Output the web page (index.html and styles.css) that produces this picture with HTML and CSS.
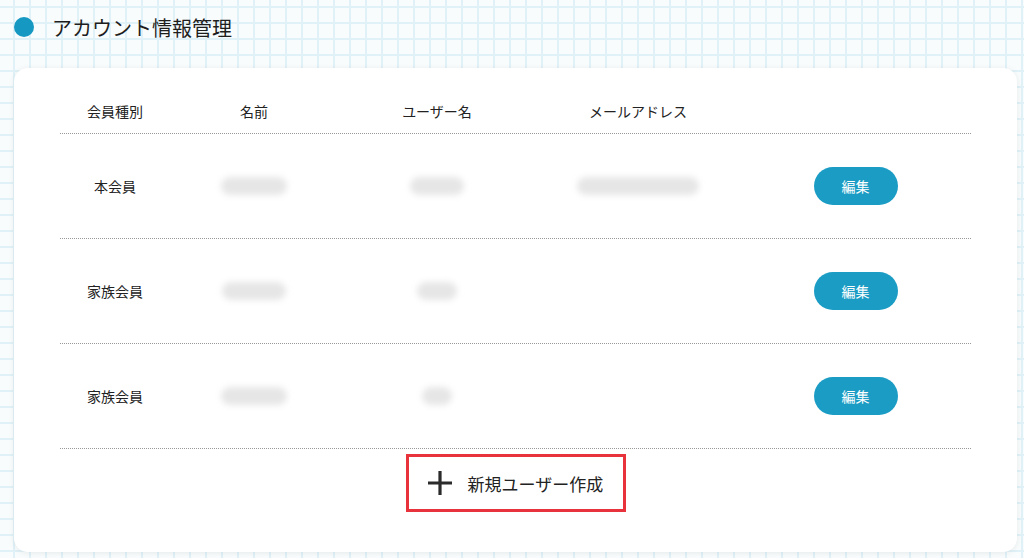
FILE: index.html
```html
<!DOCTYPE html>
<html lang="ja">

<head>
    <meta charset="UTF-8">
    <meta name="viewport" content="width=device-width, initial-scale=1.0">
    <title>アカウント情報管理</title>
    <link rel="stylesheet" href="styles.css">
</head>

<body>
    <div class="page">
        <h1 class="page-title"><span class="title-dot"></span>アカウント情報管理</h1>

        <div class="card">
            <div class="account-table">
                <div class="table-row table-head">
                    <div class="cell">会員種別</div>
                    <div class="cell">名前</div>
                    <div class="cell">ユーザー名</div>
                    <div class="cell">メールアドレス</div>
                    <div class="cell"></div>
                </div>

                <div class="table-row">
                    <div class="cell">本会員</div>
                    <div class="cell"><span class="masked" style="width: 66px"></span></div>
                    <div class="cell"><span class="masked" style="width: 54px"></span></div>
                    <div class="cell"><span class="masked" style="width: 122px"></span></div>
                    <div class="cell"><button class="edit-button">編集</button></div>
                </div>

                <div class="table-row">
                    <div class="cell">家族会員</div>
                    <div class="cell"><span class="masked" style="width: 64px"></span></div>
                    <div class="cell"><span class="masked" style="width: 40px"></span></div>
                    <div class="cell"></div>
                    <div class="cell"><button class="edit-button">編集</button></div>
                </div>

                <div class="table-row">
                    <div class="cell">家族会員</div>
                    <div class="cell"><span class="masked" style="width: 66px"></span></div>
                    <div class="cell"><span class="masked" style="width: 30px"></span></div>
                    <div class="cell"></div>
                    <div class="cell"><button class="edit-button">編集</button></div>
                </div>
            </div>

            <div class="table-footer">
                <button class="add-user">
                    <svg class="add-icon" width="28" height="28" viewBox="0 0 28 28">
                        <path d="M14 2v24M2 14h24" stroke="#2b2b2b" stroke-width="3.2" fill="none"/>
                    </svg>
                    <span>新規ユーザー作成</span>
                </button>
            </div>
        </div>
    </div>
</body>

</html>
```

FILE: styles.css
```css
* {
    margin: 0;
    padding: 0;
    box-sizing: border-box;
}

body {
    font-family: "Noto Sans CJK JP", "Noto Sans", sans-serif;
    color: #333;
    background-color: #f8fcfd;
    background-image:
        linear-gradient(#e0f2f8 2px, transparent 2px),
        linear-gradient(90deg, #e0f2f8 2px, transparent 2px);
    background-size: 16px 16px;
    background-position: 0 6px, 13px 0;
    height: 558px;
    overflow: hidden;
}

.page {
    padding: 14px 7px 0 14px;
}

.page-title {
    display: flex;
    align-items: center;
    gap: 18px;
    font-size: 20px;
    font-weight: 400;
    color: #1e1e1e;
    height: 26px;
}

.title-dot {
    width: 20px;
    height: 20px;
    border-radius: 50%;
    background: #1598c2;
}

.card {
    margin-top: 28px;
    height: 484px;
    background: #fff;
    border-radius: 14px;
    box-shadow: 0 1px 6px rgba(0, 0, 0, 0.08);
    padding: 20px 46px 0 46px;
}

.table-row {
    display: grid;
    grid-template-columns: 110px 168px 198px 204px 1fr;
    align-items: center;
    height: 105px;
    border-bottom: 1px dotted #999;
    font-size: 14px;
    color: #222;
}

.table-head {
    height: 46px;
}

.cell {
    display: flex;
    justify-content: center;
    align-items: center;
}

.masked {
    display: block;
    height: 18px;
    border-radius: 9px;
    background: #e6e6e6;
    filter: blur(3px);
}

.edit-button {
    width: 84px;
    height: 38px;
    border: none;
    border-radius: 19px;
    background: #1a9cc4;
    color: #fff;
    font-family: inherit;
    font-size: 14px;
}

.table-footer {
    display: flex;
    justify-content: center;
    padding-top: 5px;
}

.add-user {
    display: flex;
    align-items: center;
    gap: 14px;
    width: 220px;
    height: 58px;
    padding-left: 17px;
    border: 3px solid #e8323c;
    background: #fff;
    font-family: inherit;
    font-size: 17px;
    color: #222;
}
```
